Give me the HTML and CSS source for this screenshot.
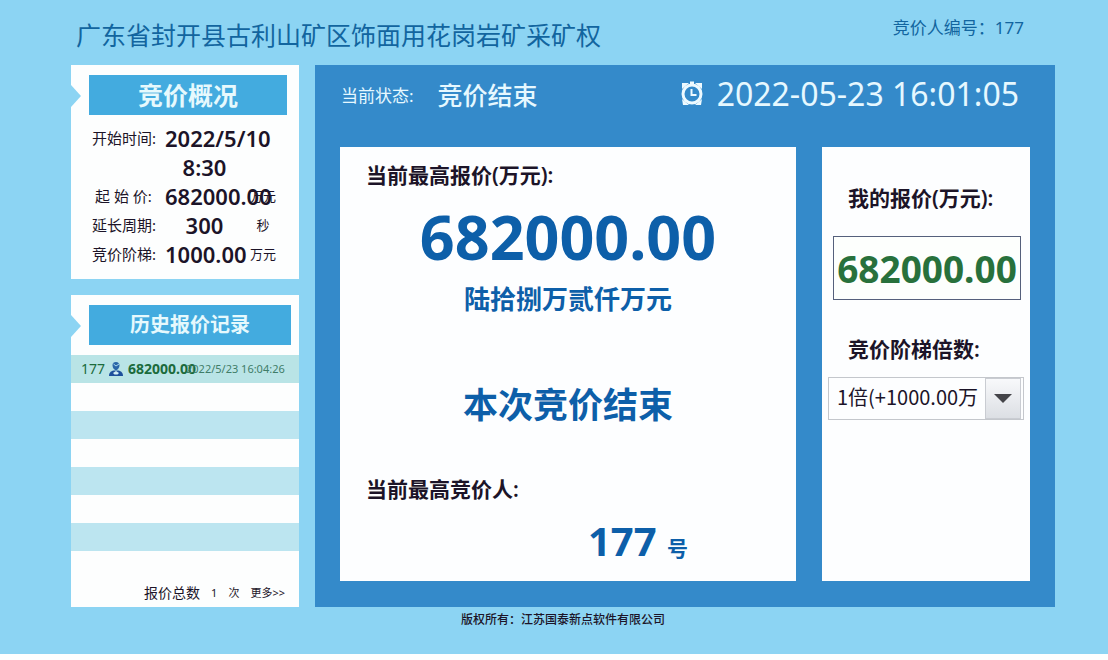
FILE: index.html
```html
<!DOCTYPE html>
<html lang="zh-CN">
<head>
    <meta charset="UTF-8">
    <meta name="viewport" content="width=device-width, initial-scale=1.0">
    <title>网上竞价</title>
    <link rel="stylesheet" href="styles.css">
</head>
<body>
    <div class="page">
        <header class="page-header">
            <h1>广东省封开县古利山矿区饰面用花岗岩矿采矿权</h1>
            <p class="bidder-no">竞价人编号：177</p>
        </header>

        <main class="content">
            <aside class="sidebar">
                <!-- Overview -->
                <section class="card">
                    <h2 class="card-title overview-title">竞价概况</h2>
                    <dl class="overview">
                        <dt>开始时间:</dt>
                        <dd class="value">2022/5/10 8:30</dd>
                        <dd class="unit"></dd>
                        <dt class="spaced">起 始 价:</dt>
                        <dd class="value">682000.00</dd>
                        <dd class="unit">万元</dd>
                        <dt>延长周期:</dt>
                        <dd class="value">300</dd>
                        <dd class="unit">秒</dd>
                        <dt>竞价阶梯:</dt>
                        <dd class="value">1000.00</dd>
                        <dd class="unit">万元</dd>
                    </dl>
                </section>

                <!-- History -->
                <section class="card history-card">
                    <h2 class="card-title history-title">历史报价记录</h2>
                    <table class="history">
                        <tr>
                            <td class="h-no">177</td>
                            <td class="h-icon">
                                <svg width="16" height="16" viewBox="0 0 16 16">
                                    <path d="M8 1c2.200 0 3.500 1.300 3.500 3.200S10.200 9 8 9 4.500 6.200 4.500 4.200 5.800 1 8 1z" fill="#2a66a8"/>
                                    <path d="M1 15c0-3.500 2-4.800 4.500-5.500h5c2.500.7 4.500 2 4.500 5.500z" fill="#1d4f9c"/>
                                    <path d="M5 12l3-2 3 2-1.500 1.500h-3z" fill="#d4eef5"/>
                                    <path d="M5.500 3l2.500 2 3-2" stroke="#a8d8ea" fill="none"/>
                                </svg>
                            </td>
                            <td class="h-price">682000.00</td>
                            <td class="h-time">2022/5/23 16:04:26</td>
                        </tr>
                        <tr><td colspan="4"></td></tr>
                        <tr><td colspan="4"></td></tr>
                        <tr><td colspan="4"></td></tr>
                        <tr><td colspan="4"></td></tr>
                        <tr><td colspan="4"></td></tr>
                        <tr><td colspan="4"></td></tr>
                    </table>
                    <div class="history-footer">
                        <span class="total">报价总数</span>
                        <span>1</span>
                        <span>次</span>
                        <a href="#">更多&gt;&gt;</a>
                    </div>
                </section>
            </aside>

            <section class="board">
                <div class="status-bar">
                    <span class="status-label">当前状态:</span>
                    <strong class="status">竞价结束</strong>
                    <svg class="clock" width="24" height="26" viewBox="0 0 24 26" fill="none" stroke="#eefaff">
                        <circle cx="12" cy="13" r="9" stroke-width="3"/>
                        <path d="M11.500 8v6h5" stroke-width="2"/>
                        <path d="M2 8V2h7zM22 8V2h-7zM2 18l1 6h6zM22 18l-1 6h-6z" fill="#eefaff" stroke="none"/>
                        <path d="M10 2h4" stroke-width="3"/>
                    </svg>
                    <time>2022-05-23 16:01:05</time>
                </div>

                <div class="panels">
                    <div class="panel highest">
                        <h3>当前最高报价(万元):</h3>
                        <p class="price">682000.00</p>
                        <p class="price-words">陆拾捌万贰仟万元</p>
                        <p class="result">本次竞价结束</p>
                        <h3>当前最高竞价人:</h3>
                        <p class="winner">177 <span>号</span></p>
                    </div>

                    <form class="panel my-bid">
                        <label for="bid">我的报价(万元):</label>
                        <input type="text" id="bid" value="682000.00">
                        <label for="times">竞价阶梯倍数:</label>
                        <div class="select-box">
                            <select id="times">
                                <option>1倍(+1000.00万</option>
                            </select>
                            <span class="arrow"></span>
                        </div>
                    </form>
                </div>
            </section>
        </main>

        <footer class="page-footer">版权所有：江苏国泰新点软件有限公司</footer>
    </div>
</body>
</html>
```
FILE: styles.css
```css
* {
    box-sizing: border-box;
    margin: 0;
    padding: 0;
}

body {
    display: flex;
    min-height: 100vh;
    padding-bottom: 6px;
    background: #fdfefe;
    color: #1c1428;
    font-family: "Noto Sans", "Noto Sans CJK SC", sans-serif;
}

.page {
    flex: 1;
    display: flex;
    flex-direction: column;
    padding: 0 53px 0 71px;
    background: #8cd4f3;
}

/* Header */
.page-header {
    display: flex;
    justify-content: space-between;
    padding: 15px 31px 10px 5px;
    color: #12659f;
}

.page-header h1 {
    font-size: 25px;
    line-height: 40px;
    font-weight: 400;
}

.bidder-no {
    font-size: 17px;
    line-height: 26px;
}

.content {
    flex: 1;
    display: flex;
    gap: 16px;
}

/* Sidebar */
.sidebar {
    width: 228px;
    display: flex;
    flex-direction: column;
    gap: 16px;
}

.card {
    position: relative;
    padding-top: 10px;
    background: #fdfefe;
}

/* notch on the left edge */
.card::before {
    content: "";
    position: absolute;
    left: 0;
    top: 20px;
    border-left: 10px solid #8cd4f3;
    border-top: 11px solid transparent;
    border-bottom: 11px solid transparent;
}

.card-title {
    background: #43abdf;
    color: #e6f9fd;
    line-height: 40px;
    text-align: center;
}

.overview-title {
    margin: 0 12px 0 18px;
    font-size: 25px;
}

.history-title {
    margin: 0 8px 0 18px;
    font-size: 20px;
}

.overview {
    display: grid;
    grid-template-columns: 66px 82px 30px;
    column-gap: 4px;
    padding: 9px 0 10px 21px;
    line-height: 29px;
}

.overview dt {
    font-size: 15px;
    white-space: nowrap;
}

.overview .spaced {
    padding-left: 3px;
    font-size: 15px;
}

.overview .value {
    margin-left: 3px;
    font-size: 22px;
    font-weight: 600;
    text-align: center;
}

.overview .unit {
    font-size: 13px;
    text-align: center;
}

.history-card {
    flex: 1;
    display: flex;
    flex-direction: column;
}

.history {
    width: 100%;
    margin-top: 10px;
    table-layout: fixed;
    border-collapse: collapse;
}

.history td {
    height: 28px;
    line-height: 20px;
    white-space: nowrap;
}

.history tr:nth-child(odd) {
    background: #bce5f0;
}

.history tr:first-child {
    background: #b9e4e6;
    color: #1c6b3c;
}

.history .h-no {
    width: 37px;
    padding-left: 10px;
    font-size: 14px;
}

.history .h-icon {
    width: 20px;
    line-height: 0;
}

.history .h-price {
    width: 58px;
    font-size: 14px;
    font-weight: 700;
}

.history .h-time {
    font-size: 11px;
    color: #3f7d68;
}

.history-footer {
    display: flex;
    align-items: center;
    justify-content: flex-end;
    gap: 11px;
    margin-top: auto;
    padding: 0 14px 4px 0;
    font-size: 11px;
    line-height: 20px;
}

.history-footer .total {
    font-size: 14px;
}

.history-footer a {
    color: inherit;
    text-decoration: none;
}

/* Main board */
.board {
    flex: 1;
    display: flex;
    flex-direction: column;
    padding: 0 25px 26px;
    background: #348aca;
}

.status-bar {
    display: flex;
    align-items: center;
    height: 82px;
    padding: 0 11px 24px 1px;
    color: #e6f8ff;
}

.status-label {
    font-size: 17px;
}

.status {
    margin-left: 24px;
    font-size: 25px;
    font-weight: 500;
}

.clock {
    margin-left: auto;
    margin-right: 13px;
}

.status-bar time {
    font-size: 32px;
    line-height: 40px;
}

.panels {
    flex: 1;
    display: flex;
    gap: 26px;
}

.panel {
    background: #fdfeff;
}

.highest {
    flex: 1;
    padding: 13px 26px 10px;
    color: #0d5fa9;
    text-align: center;
}

.panel h3,
.panel label {
    color: #1c1428;
    font-size: 21px;
    line-height: 30px;
    font-weight: 600;
    text-align: left;
}

.price {
    margin-top: 12px;
    font-size: 61px;
    line-height: 70px;
    font-weight: 700;
}

.price-words {
    margin-top: 12px;
    font-size: 26px;
    line-height: 30px;
    font-weight: 600;
}

.result {
    margin: 66px 0 44px;
    font-size: 35px;
    line-height: 50px;
    font-weight: 700;
}

.winner {
    padding-left: 140px;
    margin-top: 12px;
    font-size: 40px;
    line-height: 50px;
    font-weight: 700;
}

.winner span {
    font-size: 21px;
    line-height: 30px;
}

/* My bid */
.my-bid {
    width: 208px;
    display: flex;
    flex-direction: column;
    padding: 36px 6px;
}

.my-bid label {
    padding-left: 20px;
}

.my-bid input {
    width: 188px;
    height: 64px;
    margin: 23px 0 34px 5px;
    border: 1px solid #55607c;
    background: #fdfffd;
    color: #28713c;
    font: 700 37px "Noto Sans", sans-serif;
    text-align: center;
}

.select-box {
    display: flex;
    height: 43px;
    margin-top: 13px;
    padding-right: 2px;
    border: 1px solid #c4c7cc;
    background: #fdfeff;
}

.select-box select {
    flex: 1;
    min-width: 0;
    padding: 0 0 4px 8px;
    border: 0;
    appearance: none;
    background: transparent;
    color: #1c1428;
    font-family: "Noto Sans CJK SC", sans-serif;
    font-size: 20px;
}

.arrow {
    display: flex;
    align-items: center;
    justify-content: center;
    width: 36px;
    border: 1px solid #c9ccd2;
    background: linear-gradient(#f8f9fb, #dcdfe4);
}

.arrow::after {
    content: "";
    border-top: 9px solid #444449;
    border-left: 9px solid transparent;
    border-right: 9px solid transparent;
}

.page-footer {
    padding: 3px 0 24px;
    font-size: 12px;
    line-height: 20px;
    font-weight: 500;
    text-align: center;
}
```
